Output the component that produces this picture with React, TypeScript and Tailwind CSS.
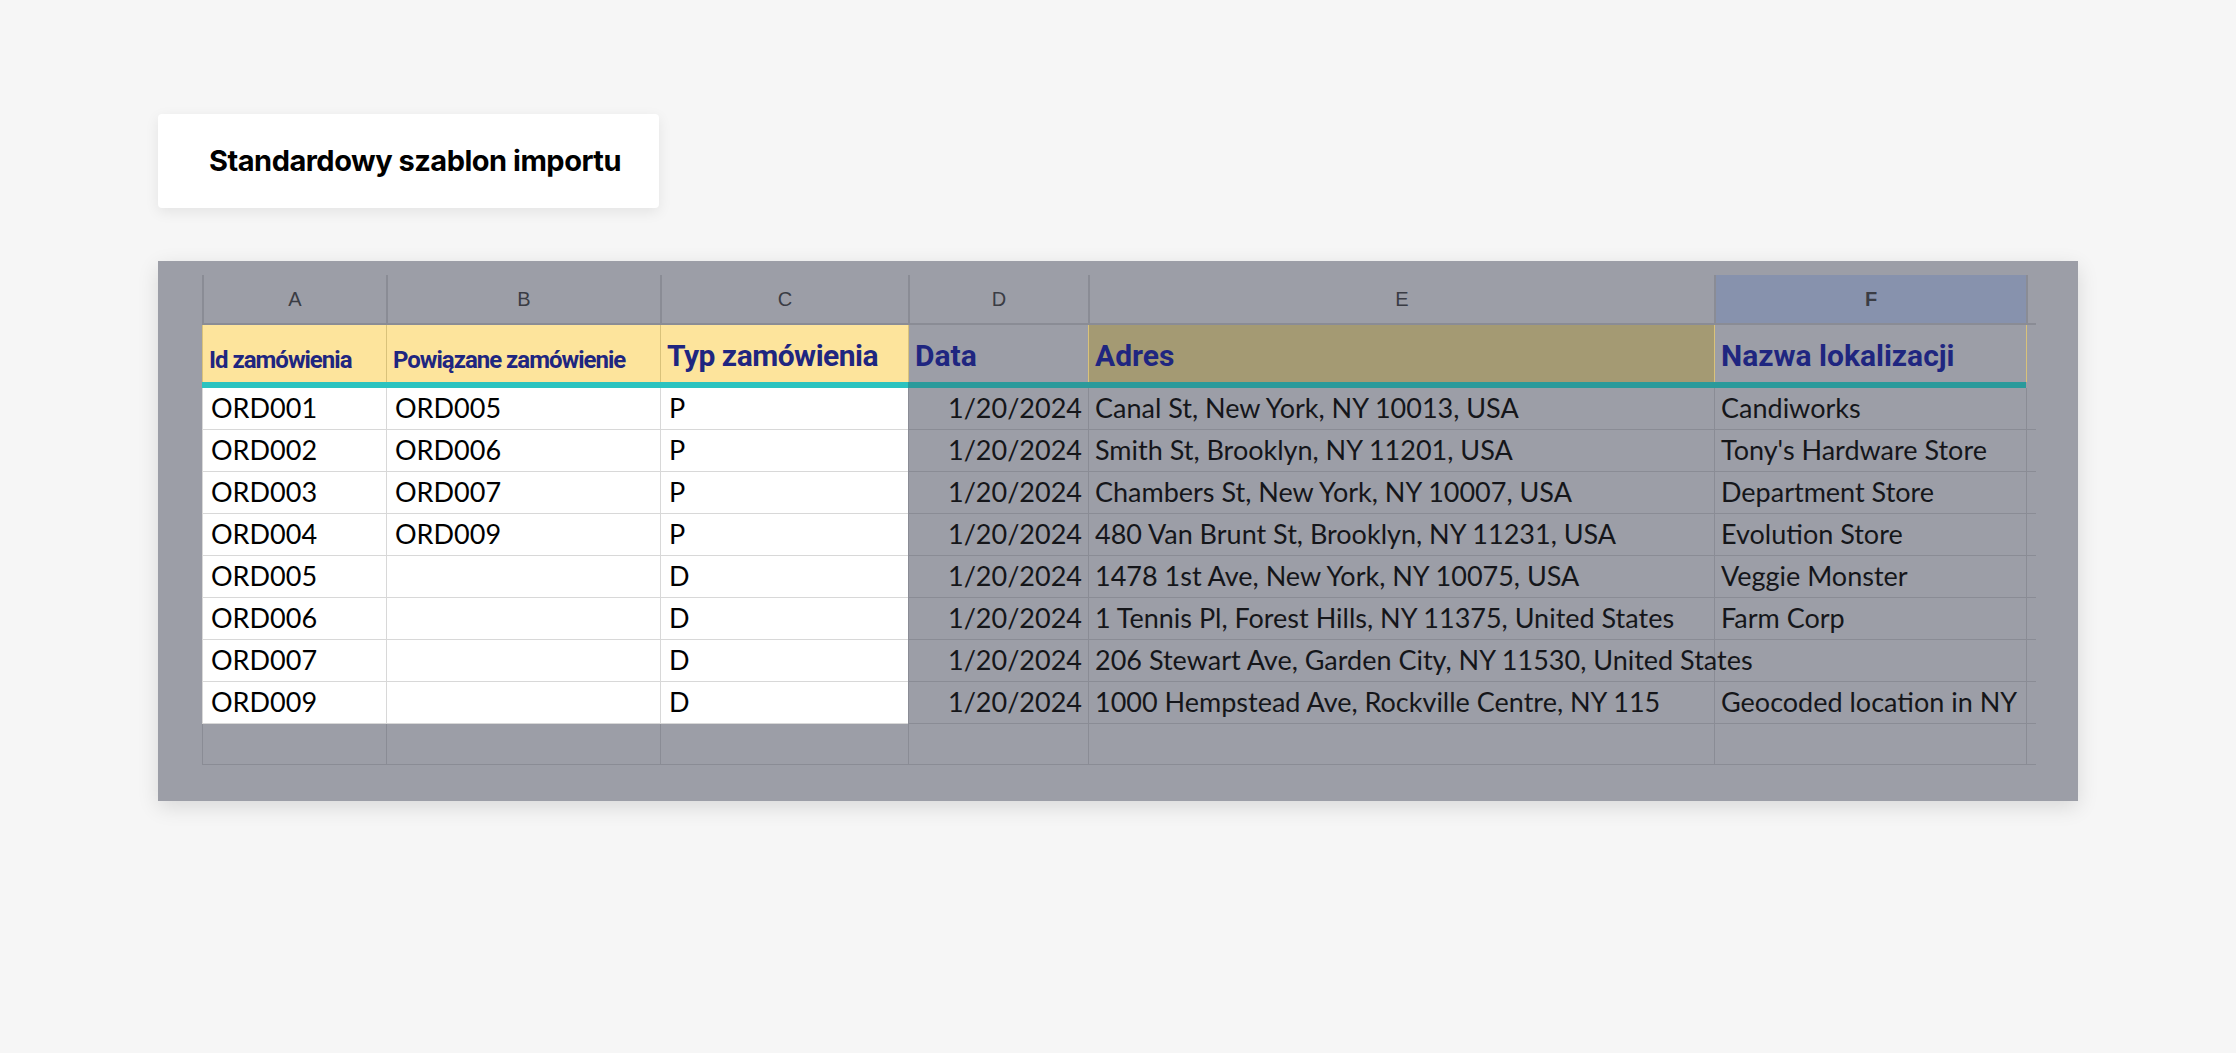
import React from "react";

const cols = [184, 274, 248, 180, 626, 312, 10];
const rows = [
  ["ORD001", "ORD005", "P", "1/20/2024", "Canal St, New York, NY 10013, USA", "Candiworks"],
  ["ORD002", "ORD006", "P", "1/20/2024", "Smith St, Brooklyn, NY 11201, USA", "Tony's Hardware Store"],
  ["ORD003", "ORD007", "P", "1/20/2024", "Chambers St, New York, NY 10007, USA", "Department Store"],
  ["ORD004", "ORD009", "P", "1/20/2024", "480 Van Brunt St, Brooklyn, NY 11231, USA", "Evolution Store"],
  ["ORD005", "", "D", "1/20/2024", "1478 1st Ave, New York, NY 10075, USA", "Veggie Monster"],
  ["ORD006", "", "D", "1/20/2024", "1 Tennis Pl, Forest Hills, NY 11375, United States", "Farm Corp"],
  ["ORD007", "", "D", "1/20/2024", "206 Stewart Ave, Garden City, NY 11530, United States", ""],
  ["ORD009", "", "D", "1/20/2024", "1000 Hempstead Ave, Rockville Centre, NY 115", "Geocoded location in NY"],
];
const gridCols = "grid-cols-[184px_274px_248px_180px_626px_312px_10px]";
const dataFont = { fontFamily: "Lato, 'Open Sans', sans-serif" } as const;
const headFont = { fontFamily: "Roboto, 'Liberation Sans', sans-serif" } as const;

export default function App() {
  return (
    <div className="w-[2236px] h-[1053px] bg-[#f6f6f6] overflow-hidden relative">
      <div className="absolute left-[158px] top-[114px] w-[501px] h-[94px] bg-white rounded-[4px] shadow-[0_4px_14px_rgba(0,0,0,0.08)] flex items-center pl-[51px]">
        <span className="text-[29px] font-bold tracking-[-0.5px] text-black" style={{ fontFamily: "Inter, sans-serif" }}>Standardowy szablon importu</span>
      </div>
      <div className="absolute left-[158px] top-[261px] w-[1920px] h-[540px] bg-[#9c9ea7] shadow-[0_6px_20px_rgba(0,0,0,0.12)] pl-[44px] pt-[14px] overflow-hidden">
        <div className={`grid ${gridCols} h-[50px]`}>
          {["A", "B", "C", "D", "E", "F", ""].map((l, i) => (
            <div key={i} className={`flex items-center justify-center text-[20px] text-[#3a3c44] border-l-[2px] border-[#8a8c95] border-b-[2px] ${i === 5 ? "bg-[#8792ad] font-bold text-[#1f2a5a]" : ""}`} style={{ fontFamily: "'Liberation Sans', sans-serif" }}>{l}</div>
          ))}
        </div>
        <div className={`grid ${gridCols} h-[57px]`}>
          {["Id zamówienia", "Powiązane zamówienie", "Typ zamówienia", "Data", "Adres", "Nazwa lokalizacji", ""].map((h, i) => (
            <div key={i} className={`flex items-end pb-[4px] pl-[6px] font-bold text-[#1f2680] whitespace-nowrap overflow-hidden border-l border-[#d9c27a] ${i < 2 ? "bg-[#fde49c] tracking-[-1px] text-[24px]" : i === 2 ? "bg-[#fde49c] text-[30px] tracking-[-0.5px]" : i === 4 ? "bg-[#a49a73] text-[30px] border-[#8a8c95]" : "text-[30px] border-[#8a8c95]"}`} style={headFont}>{h}</div>
          ))}
        </div>
        <div className="flex h-[6px]">
          <div className="w-[706px] bg-[#2cc3bf]" />
          <div className="w-[1118px] bg-[#2a9a9b]" />
        </div>
        {rows.map((r, ri) => (
          <div key={ri} className={`grid ${gridCols} h-[42px]`}>
            {[...r, ""].map((c, ci) => (
              <div key={ci} className={`flex items-center whitespace-nowrap text-[27px] border-l border-b ${ci === 4 && ri === 6 ? "overflow-visible relative z-10" : "overflow-hidden"} ${ci < 3 ? "bg-white text-black border-[#d8d8d8] pl-[8px]" : "text-[#15161a] border-[#8a8c95] " + (ci === 3 ? "justify-end pr-[6px]" : "pl-[6px]")}`} style={dataFont}>
                {c}
              </div>
            ))}
          </div>
        ))}
        <div className={`grid ${gridCols} h-[41px]`}>
          {cols.map((_, i) => <div key={i} className="border-l border-b border-[#8a8c95]" />)}
        </div>
      </div>
    </div>
  );
}
